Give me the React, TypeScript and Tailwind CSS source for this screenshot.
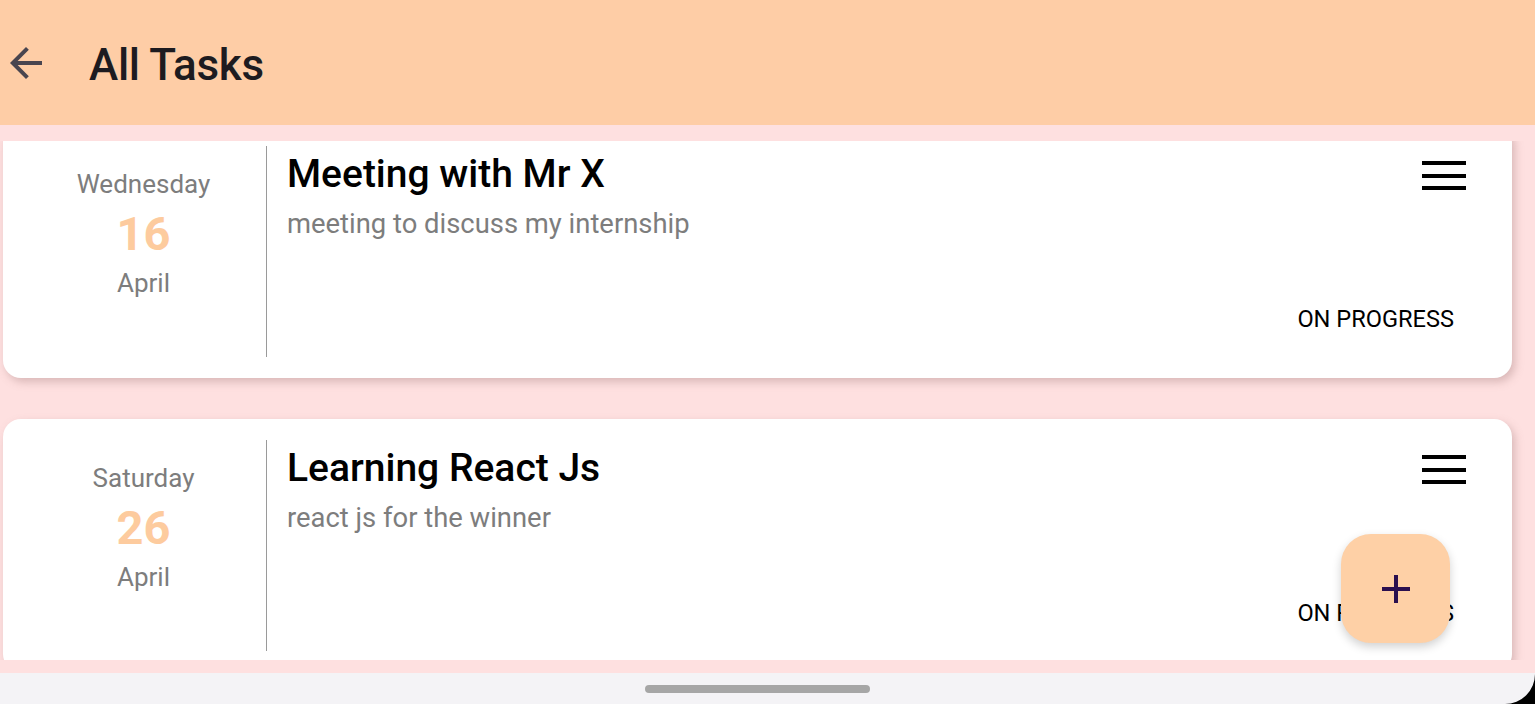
import React from "react";

type Task = { day: string; date: string; month: string; title: string; desc: string; status: string };

const tasks: Task[] = [
  { day: "Wednesday", date: "16", month: "April", title: "Meeting with Mr X", desc: "meeting to discuss my internship", status: "ON PROGRESS" },
  { day: "Saturday", date: "26", month: "April", title: "Learning React Js", desc: "react js for the winner", status: "ON PROGRESS" },
];

function Hamburger() {
  return (
    <div className="flex w-[44px] flex-col gap-[8.5px] pt-[10px]">
      <div className="h-[4px] w-full bg-black" />
      <div className="h-[4px] w-full bg-black" />
      <div className="h-[4px] w-full bg-black" />
    </div>
  );
}

function TaskCard({ t }: { t: Task }) {
  return (
    <div className="ml-[3px] mr-[23px] flex h-[253px] shrink-0 rounded-[18px] bg-white shadow-[3px_4px_8px_rgba(150,110,110,0.35)]">
      <div className="mt-[21px] flex h-[211px] w-[264px] shrink-0 flex-col items-center border-r border-[#9a9a9a] pl-[18px] pt-[22px]">
        <div className="text-[26px] leading-[32px] text-[#7d7d7d]">{t.day}</div>
        <div className="mt-[10px] text-[47px] font-bold leading-[48px] text-[#fdcb9e]">{t.date}</div>
        <div className="mt-[9px] text-[26px] leading-[32px] text-[#7d7d7d]">{t.month}</div>
      </div>
      <div className="flex flex-1 flex-col pl-[20px] pr-[46px] pt-[26px]">
        <div className="flex items-start justify-between">
          <div className="text-[39px] font-medium leading-[46px] text-black">{t.title}</div>
          <Hamburger />
        </div>
        <div className="mt-[10px] text-[27.4px] leading-[34px] text-[#7d7d7d]">{t.desc}</div>
        <div className="mt-[63px] self-end pr-[12px] text-[23.6px] leading-[30px] text-black">{t.status}</div>
      </div>
    </div>
  );
}

export default function App() {
  return (
    <div className="relative flex h-[704px] w-[1535px] flex-col overflow-hidden bg-[#fee0e0]" style={{ fontFamily: "Roboto, 'Liberation Sans', sans-serif" }}>
      <header className="flex h-[125px] shrink-0 items-center bg-[#fecda6]">
        <svg width="48" height="48" viewBox="0 0 24 24" className="ml-[2px]" fill="#49454f">
          <path d="M20 11H7.83l5.59-5.59L12 4l-8 8 8 8 1.41-1.41L7.83 13H20v-2z" />
        </svg>
        <h1 className="ml-[39px] mt-[4px] text-[44px] font-medium leading-none tracking-[-0.3px] text-[#1d1b20]">All Tasks</h1>
      </header>
      <div className="mt-[16px] h-[519px] shrink-0 overflow-hidden">
        <div className="-mt-[16px] flex flex-col gap-[41px]">
          {tasks.map((t) => (
            <TaskCard key={t.title} t={t} />
          ))}
        </div>
      </div>
      <div className="flex-1" />
      <div className="flex h-[31px] shrink-0 items-center justify-center bg-[#f4f3f6]">
        <div className="ml-[-20px] h-[8px] w-[225px] rounded-full bg-[#a6a6a6]" />
      </div>
      <div className="absolute bottom-0 right-0 h-[30px] w-[30px] bg-black [clip-path:path('M30_0_L30_30_L0_30_A30_30_0_0_0_30_0_Z')]" />
      <button className="absolute left-[1341px] top-[534px] flex h-[109px] w-[109px] items-center justify-center rounded-[30px] bg-[#fed0a6] shadow-[0_4px_10px_rgba(0,0,0,0.18)]">
        <svg width="48" height="48" viewBox="0 0 24 24" fill="#2a0f4f">
          <path d="M19 13h-6v6h-2v-6H5v-2h6V5h2v6h6v2z" />
        </svg>
      </button>
    </div>
  );
}
